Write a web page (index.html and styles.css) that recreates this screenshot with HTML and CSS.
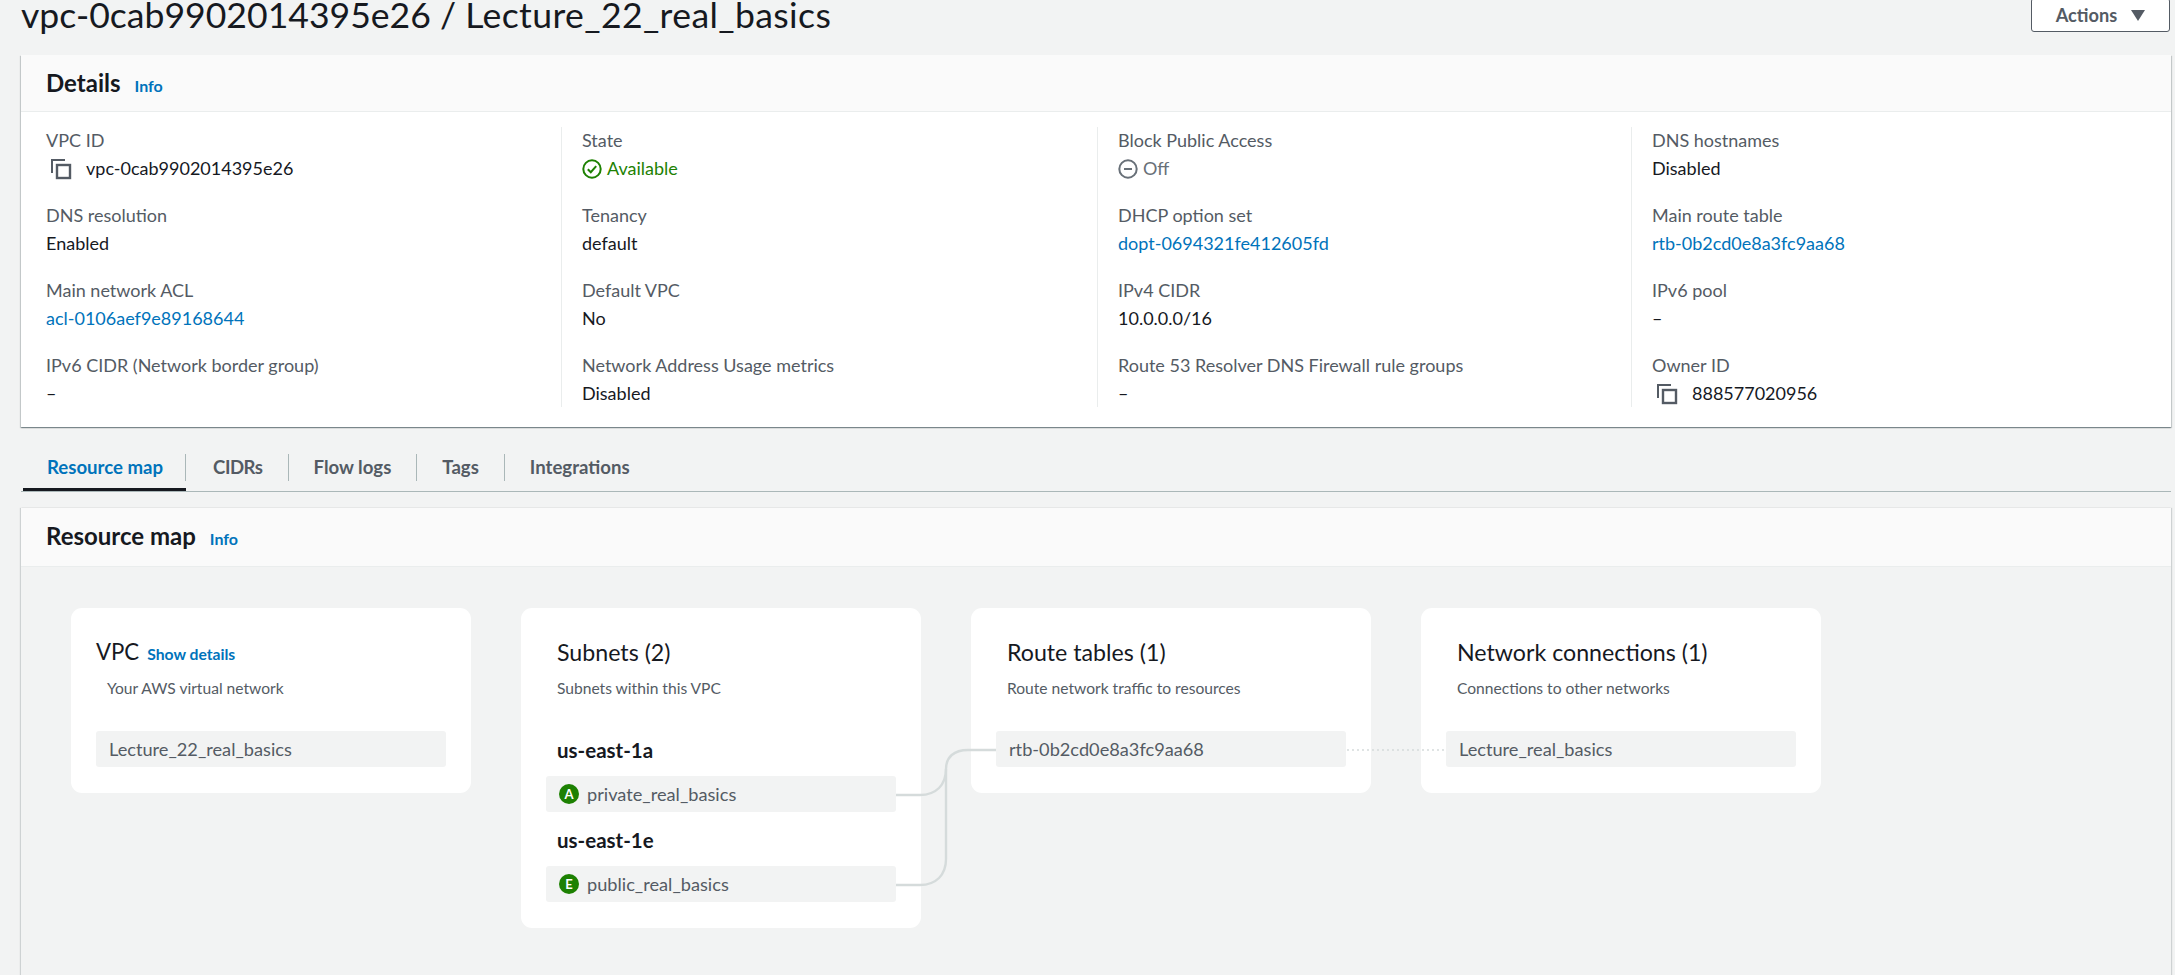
FILE: index.html
```html
<!DOCTYPE html>
<html lang="en">
<head>
    <meta charset="UTF-8">
    <title>Lecture_22_real_basics</title>
    <link rel="stylesheet" href="styles.css">
</head>
<body>
<div class="top">
    <h1 class="page_title">vpc-0cab9902014395e26 / <span class="vpc_name">Lecture_22_real_basics</span></h1>
    <button class="actions">Actions <span class="caret"></span></button>
</div>

<section class="card">
    <div class="card_head">
        <h2>Details</h2>
        <a class="info" href="#">Info</a>
    </div>
    <div class="details">
        <div class="col">
            <div class="item">
                <div class="label">VPC ID</div>
                <div class="value with_icon">
                    <svg class="copy" viewBox="0 0 22 22"><path d="M2 15V2h13" fill="none" stroke="#545b64" stroke-width="2"/><rect x="7" y="7" width="13" height="13" fill="none" stroke="#545b64" stroke-width="2.4"/></svg>
                    <span class="copy_text">vpc-0cab9902014395e26</span>
                </div>
            </div>
            <div class="item">
                <div class="label">DNS resolution</div>
                <div class="value">Enabled</div>
            </div>
            <div class="item">
                <div class="label">Main network ACL</div>
                <div class="value"><a href="#">acl-0106aef9e89168644</a></div>
            </div>
            <div class="item">
                <div class="label">IPv6 CIDR (Network border group)</div>
                <div class="value">–</div>
            </div>
        </div>
        <div class="col">
            <div class="item">
                <div class="label">State</div>
                <div class="value with_icon available">
                    <svg class="status" viewBox="0 0 20 20"><circle cx="10" cy="10" r="8.7" fill="none" stroke="#1d8102" stroke-width="2"/><path d="M5.8 10.2l3 3 5.4-6" fill="none" stroke="#1d8102" stroke-width="2"/></svg>
                    Available
                </div>
            </div>
            <div class="item">
                <div class="label">Tenancy</div>
                <div class="value">default</div>
            </div>
            <div class="item">
                <div class="label">Default VPC</div>
                <div class="value">No</div>
            </div>
            <div class="item">
                <div class="label">Network Address Usage metrics</div>
                <div class="value">Disabled</div>
            </div>
        </div>
        <div class="col">
            <div class="item">
                <div class="label">Block Public Access</div>
                <div class="value with_icon off">
                    <svg class="status" viewBox="0 0 20 20"><circle cx="10" cy="10" r="8.7" fill="none" stroke="#687078" stroke-width="2"/><path d="M6 10h8" fill="none" stroke="#687078" stroke-width="2"/></svg>
                    Off
                </div>
            </div>
            <div class="item">
                <div class="label">DHCP option set</div>
                <div class="value"><a href="#">dopt-0694321fe412605fd</a></div>
            </div>
            <div class="item">
                <div class="label">IPv4 CIDR</div>
                <div class="value">10.0.0.0/16</div>
            </div>
            <div class="item">
                <div class="label">Route 53 Resolver DNS Firewall rule groups</div>
                <div class="value">–</div>
            </div>
        </div>
        <div class="col">
            <div class="item">
                <div class="label">DNS hostnames</div>
                <div class="value">Disabled</div>
            </div>
            <div class="item">
                <div class="label">Main route table</div>
                <div class="value"><a href="#">rtb-0b2cd0e8a3fc9aa68</a></div>
            </div>
            <div class="item">
                <div class="label">IPv6 pool</div>
                <div class="value">–</div>
            </div>
            <div class="item">
                <div class="label">Owner ID</div>
                <div class="value with_icon">
                    <svg class="copy" viewBox="0 0 22 22"><path d="M2 15V2h13" fill="none" stroke="#545b64" stroke-width="2"/><rect x="7" y="7" width="13" height="13" fill="none" stroke="#545b64" stroke-width="2.4"/></svg>
                    <span class="copy_text">888577020956</span>
                </div>
            </div>
        </div>
    </div>
</section>

<nav class="tabs">
    <a class="tab active" href="#"><span>Resource map</span></a>
    <a class="tab tab_cidrs" href="#"><span>CIDRs</span></a>
    <a class="tab" href="#"><span>Flow logs</span></a>
    <a class="tab" href="#"><span>Tags</span></a>
    <a class="tab" href="#"><span>Integrations</span></a>
</nav>

<section class="map_card">
    <div class="card_head map_head">
        <h2>Resource map</h2>
        <a class="info" href="#">Info</a>
    </div>
    <div class="map">
        <div class="tile">
            <h3 class="tile_title vpc_title">VPC <a class="show" href="#">Show details</a></h3>
            <p class="tile_sub">Your AWS virtual network</p>
            <div class="pill first">Lecture_22_real_basics</div>
        </div>
        <div class="tile">
            <h3 class="tile_title">Subnets (2)</h3>
            <p class="tile_sub">Subnets within this VPC</p>
            <div class="zone first_zone">us-east-1a</div>
            <div class="pill"><span class="badge">A</span>private_real_basics</div>
            <div class="zone next_zone">us-east-1e</div>
            <div class="pill"><span class="badge">E</span>public_real_basics</div>
        </div>
        <div class="tile">
            <h3 class="tile_title">Route tables (1)</h3>
            <p class="tile_sub">Route network traffic to resources</p>
            <div class="pill first">rtb-0b2cd0e8a3fc9aa68</div>
        </div>
        <div class="tile">
            <h3 class="tile_title">Network connections (1)</h3>
            <p class="tile_sub">Connections to other networks</p>
            <div class="pill first">Lecture_real_basics</div>
        </div>
        <svg class="links" viewBox="21 568 2150 408">
            <path d="M896 796H920C936 796 946 786 946 770C946 758 954 751 968 751H996"/>
            <path d="M896 886H920C936 886 946 876 946 860V770"/>
            <path class="dots" d="M1348 751H1444"/>
        </svg>
    </div>
</section>
</body>
</html>
```

FILE: styles.css
```css
html, body{
    margin: 0;
    height: 975px;
    overflow: hidden;
}
body{
    background-color: #f2f3f3;
    color: #16191f;
    font-family: Lato, "Liberation Sans", sans-serif;
    font-size: 18px;
    line-height: 27.7px;
}
a{
    color: #0073bb;
    text-decoration: none;
}
h1, h2, h3, p{
    margin: 0;
}

.top{
    display: flex;
    justify-content: space-between;
    height: 55px;
    padding: 0 5px 0 21px;
}
.page_title{
    font-size: 35.6px;
    font-weight: 400;
    line-height: 30px;
}
.vpc_name{
    letter-spacing: .38px;
}
.actions{
    display: flex;
    align-items: center;
    gap: 14px;
    height: 34px;
    width: 139px;
    justify-content: center;
    margin-top: -2px;
    background-color: #fff;
    border: 1px solid #545b64;
    border-radius: 3px;
    color: #545b64;
    font: bold 18.2px Lato, sans-serif;
}
.caret{
    width: 0;
    height: 0;
    border-left: 7px solid transparent;
    border-right: 7px solid transparent;
    border-top: 11px solid #545b64;
}

.card{
    margin: 0 4px 0 21px;
    background-color: #fff;
    box-shadow: 0 1px 1px 0 rgba(0,28,36,.3), 1px 1px 1px 0 rgba(0,28,36,.15), -1px 1px 1px 0 rgba(0,28,36,.15);
}
.card_head{
    display: flex;
    align-items: baseline;
    gap: 14px;
    height: 57px;
    padding-left: 25px;
    box-sizing: border-box;
    line-height: 56px;
    background-color: #fafafa;
    border-bottom: 1px solid #eaeded;
}
.card_head h2{
    font-size: 24px;
    font-weight: bold;
}
.info{
    font-size: 16px;
    font-weight: bold;
}
.details{
    display: grid;
    grid-template-columns: 515px 536px 534px 1fr;
    padding: 15px 0 20px 25px;
}
.col{
    display: flex;
    flex-direction: column;
    gap: 19.6px;
}
.col + .col{
    padding-left: 20px;
    border-left: 1px solid #eaeded;
}
.label{
    color: #545b64;
}
.with_icon{
    display: flex;
    align-items: center;
}
.copy{
    width: 22px;
    height: 22px;
    margin: 0 14px 0 4px;
}
.status{
    width: 20px;
    height: 20px;
    margin-right: 5px;
}
.available{
    color: #1d8102;
}
.off{
    color: #687078;
}

.tabs{
    display: flex;
    margin: 16px 4px 0 21px;
    height: 48px;
    border-bottom: 1px solid #aab7b8;
    font-size: 18.6px;
}
.tab{
    display: flex;
    align-items: center;
    height: 48px;
    box-sizing: border-box;
    color: #545b64;
    font-weight: bold;
    margin-left: 2px;
}
.tab + .tab{
    margin-left: 0;
}
.tab span{
    display: block;
    padding: 0 25px;
    height: 27px;
    border-right: 1px solid #aab7b8;
    line-height: 27px;
}
.tab:last-child span{
    border-right: 0;
}
.tab.active{
    color: #0073bb;
    border-bottom: 3px solid #16191f;
    padding-top: 3px;
}
.tab.active span{
    padding: 0 22px 0 24px;
}
.tab_cidrs span{
    letter-spacing: -.5px;
}
.tab.tab_cidrs span{
    padding-left: 27px;
}

.map_card{
    margin: 16px 4px 0 21px;
    box-shadow: -1px 0 1px 0 rgba(0,28,36,.15), 1px 0 1px 0 rgba(0,28,36,.15);
}
.map_head{
    height: 59px;
    line-height: 56px;
}
.map{
    position: relative;
    display: flex;
    align-items: flex-start;
    gap: 50px;
    height: 408px;
    box-sizing: border-box;
    padding: 41px 0 0 50px;
}
.tile{
    box-sizing: border-box;
    width: 400px;
    padding: 29px 25px 26px 36px;
    background-color: #fff;
    border-radius: 11px;
}
.tile_title{
    font-size: 23.2px;
    font-weight: 400;
    line-height: 30px;
}
.vpc_title{
    display: flex;
    align-items: baseline;
    gap: 8px;
    height: 30px;
    margin-left: -11px;
    font-size: 22.2px;
}
.show{
    font-size: 15.7px;
    font-weight: bold;
    line-height: 20px;
}
.tile_sub{
    margin-top: 10px;
    color: #545b64;
    font-size: 15.6px;
    line-height: 22px;
}
.pill{
    display: flex;
    align-items: center;
    height: 36px;
    margin-left: -11px;
    padding-left: 13px;
    background-color: #f2f3f3;
    border-radius: 3px;
    color: #545b64;
    font-size: 18.2px;
}
.pill.first{
    margin-top: 32px;
}
.zone{
    margin-bottom: 12px;
    font-size: 20.5px;
    font-weight: bold;
    line-height: 28px;
}
.first_zone{
    margin-top: 37px;
}
.next_zone{
    margin-top: 14px;
}
.badge{
    display: flex;
    align-items: center;
    justify-content: center;
    flex: none;
    width: 20px;
    height: 20px;
    margin-right: 8px;
    background-color: #1d8102;
    border-radius: 50%;
    color: #fff;
    font-size: 13px;
    font-weight: bold;
}
.links{
    position: absolute;
    left: 0;
    top: 0;
    width: 2150px;
    height: 408px;
    pointer-events: none;
}
.links path{
    fill: none;
    stroke: #d5dbdb;
    stroke-width: 2.4;
}
.links .dots{
    stroke-width: 2;
    stroke-dasharray: 0 5;
    stroke-linecap: round;
}
```
